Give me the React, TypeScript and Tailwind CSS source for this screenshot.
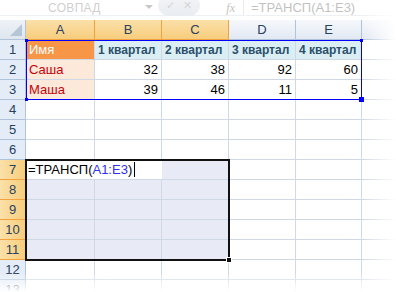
import React from 'react';

const cols = ['A', 'B', 'C', 'D', 'E'];
const colW = ['w-[69px]', 'w-[67px]', 'w-[67px]', 'w-[67px]', 'w-[66px]'];

const data: (string | number)[][] = [
    ['Имя', '1 квартал', '2 квартал', '3 квартал', '4 квартал'],
    ['Саша', 32, 38, 92, 60],
    ['Маша', 39, 46, 11, 5],
];

function ColHeader({ label, i }: { label: string; i: number }) {
    const selected = i < 3;
    return (
        <div
            className={`${colW[i]} h-full shrink-0 flex items-center justify-center border-r border-b text-[13px] ${
                selected
                    ? 'bg-gradient-to-b from-[#fbe0a8] to-[#f7cd7c] border-[#f2a33d] text-[#27415f]'
                    : 'bg-gradient-to-b from-[#f6f8fc] to-[#e2e9f3] border-[#b1c3d8] text-[#27415f]'
            }`}
        >
            {label}
        </div>
    );
}

function RowHeader({ n }: { n: number }) {
    const selected = n >= 7 && n <= 11;
    return (
        <div
            className={`w-[26px] h-full shrink-0 flex items-center justify-center border-r border-b text-[13px] ${
                selected
                    ? 'bg-gradient-to-r from-[#fbe0a8] to-[#f7cd7c] border-[#f2a33d] text-[#27415f]'
                    : 'bg-[#e4ecf7] border-[#b1c3d8] text-[#27415f]'
            }`}
        >
            {n}
        </div>
    );
}

function Row({ n }: { n: number }) {
    const values = n <= 3 ? data[n - 1] : null;
    return (
        <div className="flex h-[20px]">
            <RowHeader n={n} />
            {cols.map((c, i) => {
                let cls = 'bg-white text-[13px]';
                let text: React.ReactNode = null;
                let align = 'justify-end pr-[3px]';
                if (values) {
                    const v = values[i];
                    text = v;
                    if (n === 1 && i === 0) {
                        cls = 'bg-[#f79646] text-white text-[13px]';
                        align = 'justify-start pl-[3px]';
                    } else if (n === 1) {
                        cls = 'bg-[#daeef3] text-[#2b4e6c] font-bold text-[12px]';
                        align = 'justify-start pl-[3px]';
                    } else if (i === 0) {
                        cls = 'bg-[#fde9d9] text-[#c8000a] text-[13px]';
                        align = 'justify-start pl-[3px]';
                    } else {
                        cls = 'bg-white text-black text-[13px]';
                    }
                } else if (n >= 8 && n <= 11 && i < 3) {
                    cls = 'bg-[#e8ebf5]';
                } else if (n === 7 && i === 2) {
                    cls = 'bg-[#e8ebf5]';
                }
                return (
                    <div
                        key={c}
                        className={`${colW[i]} h-full shrink-0 flex items-center border-r border-b border-[#d0d7e5] whitespace-nowrap ${cls} ${align}`}
                    >
                        {text}
                    </div>
                );
            })}
            <div className="flex-1 h-full border-b border-[#d0d7e5] bg-white" />
        </div>
    );
}

export default function App() {
    const rows = Array.from({ length: 13 }, (_, i) => i + 1);
    return (
        <div className="relative w-[396px] h-[292px] overflow-hidden bg-white font-['Liberation_Sans',sans-serif]">
            {/* formula bar, washed out */}
            <div className="flex h-[16px] border-b border-[#d6dde6] opacity-40 text-[12px]">
                <div className="w-[158px] shrink-0 flex items-center relative">
                    <span className="ml-[48px] text-[#8a8a8a] tracking-wide">СОВПАД</span>
                    <span className="absolute left-[145px] top-[5px] w-0 h-0 border-l-[4px] border-r-[4px] border-t-[4px] border-l-transparent border-r-transparent border-t-[#777]" />
                </div>
                <div className="w-[42px] shrink-0 h-[22px] -mt-[6px] rounded-full bg-gradient-to-b from-[#e4e8ee] to-[#c9d1dc] flex items-center justify-around px-1 text-[#999] text-[11px]">
                    <span>✓</span>
                    <span>✕</span>
                </div>
                <div className="w-[43px] shrink-0 flex items-center justify-end pr-[8px] italic text-[#666] font-['Liberation_Serif',serif] text-[12px]">fx</div>
                <div className="flex-1 flex items-center pl-[7px] bg-white border-l border-[#ccc] text-[#666] text-[13px]">
                    =ТРАНСП(A1:E3)
                </div>
            </div>
            <div className="h-[4px]" />
            {/* column headers */}
            <div className="flex h-[20px]">
                <div className="w-[26px] h-full shrink-0 relative bg-gradient-to-b from-[#eef2f7] to-[#dfe6ef] border-r border-b border-[#b1c3d8]">
                    <span className="absolute right-[3px] bottom-[3px] w-0 h-0 border-b-[12px] border-l-[12px] border-b-[#b7c6d7] border-l-transparent" />
                </div>
                {cols.map((c, i) => (
                    <ColHeader key={c} label={c} i={i} />
                ))}
                <div className="flex-1 h-full border-b border-[#b1c3d8] bg-gradient-to-b from-[#f6f8fc] to-[#e2e9f3]" />
            </div>
            {rows.map((n) => (
                <Row key={n} n={n} />
            ))}

            {/* active cell editor A7 */}
            <div className="absolute left-[26px] top-[160px] w-[136px] h-[19px] bg-white flex items-center pl-[2px] text-[13px] text-black whitespace-nowrap">
                =ТРАНСП(<span className="text-[#3030f0]">A1:E3</span>)
                <span className="ml-[2px] w-[1px] h-[15px] bg-black" />
            </div>

            {/* range reference highlight A1:E3 */}
            <div className="absolute left-[26px] top-[40px] w-[336px] h-[60px] border border-[#0000ff]" />
            <div className="absolute left-[25px] top-[39px] w-[3px] h-[3px] bg-[#0000ff]" />
            <div className="absolute left-[360px] top-[39px] w-[3px] h-[3px] bg-[#0000ff]" />
            <div className="absolute left-[25px] top-[98px] w-[3px] h-[3px] bg-[#0000ff]" />
            <div className="absolute left-[359px] top-[97px] w-[5px] h-[5px] bg-[#0000ff]" />

            {/* selection A7:C11 */}
            <div className="absolute left-[25px] top-[159px] w-[205px] h-[102px] border-2 border-[#111]" />
            <div className="absolute left-[226px] top-[257px] w-[6px] h-[6px] bg-[#111] border border-white" />

            {/* fades */}
            <div className="absolute right-0 top-0 w-[34px] h-full bg-gradient-to-r from-transparent to-white" />
            <div className="absolute left-0 bottom-0 w-full h-[20px] bg-gradient-to-b from-transparent to-white" />
        </div>
    );
}
